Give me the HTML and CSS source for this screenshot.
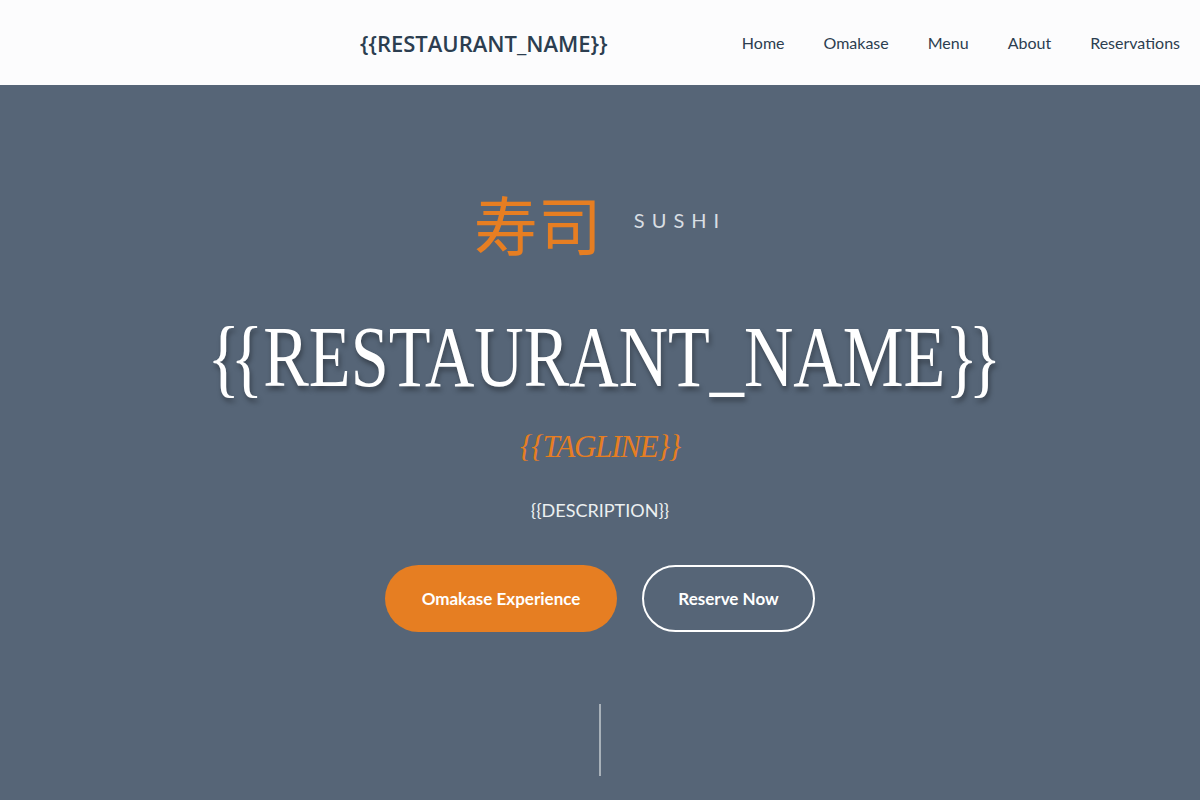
FILE: index.html
```html
<!DOCTYPE html>
<html lang="en">
<head>
<meta charset="utf-8">
<title>Restaurant</title>
<link rel="stylesheet" href="styles.css">
</head>
<body>
<header class="site-header">
  <div class="logo">{{RESTAURANT_NAME}}</div>
  <nav class="nav">
    <a href="#">Home</a>
    <a href="#">Omakase</a>
    <a href="#">Menu</a>
    <a href="#">About</a>
    <a href="#">Reservations</a>
  </nav>
</header>
<main class="hero">
  <div class="kicker">
    <span class="kanji">寿司</span>
    <span class="sushi">SUSHI</span>
  </div>
  <h1 class="title"><span class="br">{{</span>RESTAURANT_NAME<span class="br">}}</span></h1>
  <p class="tagline">{{TAGLINE}}</p>
  <p class="desc">{{DESCRIPTION}}</p>
  <div class="actions">
    <a class="btn btn-primary" href="#">Omakase Experience</a>
    <a class="btn btn-outline" href="#">Reserve Now</a>
  </div>
  <div class="scroll-line"></div>
</main>
</body>
</html>
```
FILE: styles.css
```css
* { box-sizing: border-box; }
html, body { margin: 0; padding: 0; }
body {
  font-family: "Lato", "Open Sans", sans-serif;
  background: #566577;
  height: 800px;
  overflow: hidden;
}
.site-header {
  height: 85px;
  background: #fcfcfd;
  display: flex;
  align-items: center;
  justify-content: space-between;
  padding: 0 20px 0 360px;
}
.logo {
  font-family: "Open Sans", sans-serif;
  font-weight: 600;
  font-size: 22px;
  letter-spacing: 0;
  color: #2c3e50;
}
.nav {
  display: flex;
  gap: 39px;
}
.nav a {
  font-family: "Lato", sans-serif;
  font-size: 16px;
  color: #2c3e50;
  text-decoration: none;
}
.hero {
  display: flex;
  flex-direction: column;
  align-items: center;
  padding-top: 97px;
  color: #fff;
}
.kicker {
  display: flex;
  align-items: center;
  gap: 32px;
  height: 80px;
}
.kanji {
  font-family: "Noto Sans CJK JP", sans-serif;
  font-size: 64px;
  color: #e67e22;
  line-height: 1;
}
.sushi {
  font-family: "Lato", sans-serif;
  font-size: 20px;
  letter-spacing: 7px;
  color: #d9dee3;
  margin-top: -4px;
}
.title {
  font-family: "Liberation Serif", serif;
  font-weight: 400;
  font-size: 86px;
  line-height: 1;
  margin: 52px 0 0;
  white-space: nowrap;
  transform: scaleX(0.795);
  text-shadow: 2px 4px 6px rgba(0,0,0,0.35);
}
.title .br {
  letter-spacing: -12px;
}
.title .br:first-child {
  margin-right: 12px;
}
.tagline {
  font-family: "Liberation Serif", serif;
  font-style: italic;
  font-size: 31px;
  letter-spacing: -1.2px;
  color: #e67e22;
  margin: 31px 0 0;
  line-height: 1;
}
.desc {
  font-family: "Lato", sans-serif;
  font-size: 18px;
  color: #ecf0f1;
  margin: 38px 0 0;
  line-height: 1.2;
}
.actions {
  display: flex;
  gap: 25px;
  margin-top: 43px;
}
.btn {
  display: flex;
  align-items: center;
  justify-content: center;
  height: 67px;
  border-radius: 34px;
  font-family: "Lato", sans-serif;
  font-weight: 700;
  font-size: 17px;
  color: #fff;
  text-decoration: none;
}
.btn-primary {
  width: 232px;
  background: #e67e22;
}
.btn-outline {
  width: 173px;
  border: 2px solid #fff;
}
.scroll-line {
  width: 2px;
  height: 72px;
  margin-top: 72px;
  background: rgba(236, 240, 241, 0.55);
}
```
